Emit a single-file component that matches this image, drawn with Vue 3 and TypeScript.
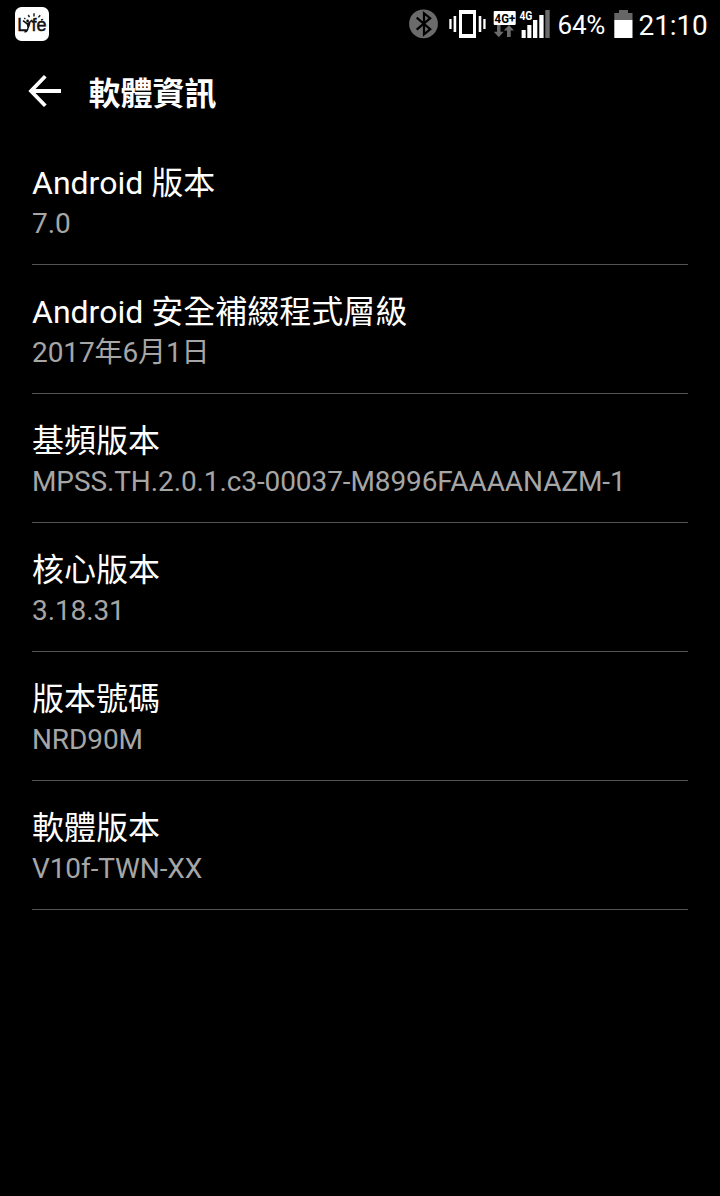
<script setup lang="ts">
interface InfoItem {
  label: string
  value: string
}

const items: InfoItem[] = [
  { label: 'Android 版本', value: '7.0' },
  { label: 'Android 安全補綴程式層級', value: '2017年6月1日' },
  { label: '基頻版本', value: 'MPSS.TH.2.0.1.c3-00037-M8996FAAAANAZM-1' },
  { label: '核心版本', value: '3.18.31' },
  { label: '版本號碼', value: 'NRD90M' },
  { label: '軟體版本', value: 'V10f-TWN-XX' },
]
</script>

<template>
  <div class="screen">
    <header class="status">
      <svg class="app-icon" width="34" height="34" viewBox="0 0 34 34">
        <rect width="34" height="34" rx="6.5" fill="#fff" />
        <text x="2.2" y="24" class="logo">L</text>
        <text x="16.6" y="24" class="logo" textLength="15" lengthAdjust="spacingAndGlyphs">fe</text>
        <path d="M8 13.6l4.6 3.6L17.2 13M14.8 16l-2.2 6.5q-1 2.8-3.2 2.2M12.6 17.2l.6 4" fill="none" stroke="#111" stroke-width="1.6" />
        <circle cx="12.6" cy="14" r="1.4" fill="#111" />
        <path d="M19 6.3v3.2M13.2 8l1.3 2.2M25.2 8.2l-1.8 2.2M28.2 12.4l-2.2.6M9.2 11l1.2 1" fill="none" stroke="#222" stroke-width="1.5" />
      </svg>
      <div class="cluster">
        <svg class="bt" width="30" height="30" viewBox="0 0 30 30">
          <circle cx="14.5" cy="14.8" r="14.4" fill="#6b6b6b" />
          <path d="M7.7 8.7L21.2 20.2L15 25.4V4.2L21.2 9.2L7.7 20.7" fill="none" stroke="#000" stroke-width="2.2" />
        </svg>
        <svg class="vib" width="38" height="30" viewBox="0 0 38 30">
          <path d="M10 1h17v28H10zM13 5v20h11V5z" fill="#fff" fill-rule="evenodd" />
          <path d="M4.6 7h2.6v16H4.6zM.3 10h2.3v10H.3zM29.7 7h2.6v16h-2.6zM34.3 10h2.3v10h-2.3z" fill="#fff" />
        </svg>
        <svg class="data" width="24" height="28" viewBox="0 0 24 28">
          <rect x=".7" y="1" width="22" height="14" rx="1" fill="#fff" />
          <text x="1.6" y="12.8" class="net dark" textLength="20.6" lengthAdjust="spacingAndGlyphs">4G+</text>
          <path d="M4 15h3.5v6.8h3.2L5.8 27.3.8 21.8H4zM14 27v-6.5h-3.2l5.2-5.5 5 5.5h-3.3V27z" fill="#6b6b6b" />
        </svg>
        <svg class="signal" width="32" height="30" viewBox="0 0 32 30">
          <text x=".4" y="10.8" class="net light" textLength="13" lengthAdjust="spacingAndGlyphs">4G</text>
          <path d="M2.6 21h4.1v8H2.6zM8.3 16h4.1v13H8.3zM14 11h4.3v18H14zM20.3 6h4.3v23h-4.3z" fill="#fff" />
          <path d="M26.3 1h4.4v28h-4.4z" fill="#6b6b6b" />
        </svg>
        <span class="percent">64%</span>
        <svg class="battery" width="19" height="28" viewBox="0 0 19 28">
          <path d="M5 0h9v3h4.5v7H.3V3H5z" fill="#666" />
          <path d="M.3 10h18.2v18H.3z" fill="#fff" />
        </svg>
        <span class="clock">21:10</span>
      </div>
    </header>
    <div class="bar">
      <svg class="back" width="34" height="32" viewBox="0 0 34 32">
        <path d="M17.3 1.3L3 16l14.3 14.7M3 16h30" fill="none" stroke="#fff" stroke-width="3.8" />
      </svg>
      <h1>軟體資訊</h1>
    </div>
    <main class="list">
      <section v-for="item in items" :key="item.label" class="item">
        <div class="label">{{ item.label }}</div>
        <div class="value">{{ item.value }}</div>
      </section>
    </main>
  </div>
</template>

<style>
body {
  margin: 0;
  background: #000;
}
</style>

<style scoped>
.screen {
  width: 720px;
  height: 1196px;
  overflow: hidden;
  background: #000;
  color: #fff;
  font-family: Roboto, 'Noto Sans CJK TC', sans-serif;
}
.status {
  display: flex;
  justify-content: space-between;
  align-items: flex-start;
  height: 48px;
  padding: 0 12px 0 15px;
  box-sizing: border-box;
}
.status svg {
  overflow: visible;
}
.app-icon {
  margin-top: 7px;
}
.logo {
  font: 400 18px 'Liberation Sans', sans-serif;
  fill: #111;
  stroke: #111;
  stroke-width: 0.5px;
}
.cluster {
  display: flex;
  align-items: flex-start;
  width: 299px;
}
.cluster > * {
  flex: none;
}
.bt {
  margin-top: 9px;
}
.vib {
  margin: 9px 0 0 10px;
}
.data {
  margin: 10px 0 0 6px;
}
.signal {
  margin: 9px 0 0 2px;
}
.net {
  font-family: Roboto, sans-serif;
  font-weight: 700;
}
.dark {
  font-size: 13px;
  fill: #000;
}
.light {
  font-size: 12px;
  fill: #fff;
}
.percent {
  width: 56.5px;
  margin: 7px 0 0 6.5px;
  font-size: 26px;
  line-height: 36px;
  letter-spacing: -0.2px;
}
.battery {
  margin-top: 10px;
}
.clock {
  margin: 8px 0 0 5.5px;
  font-size: 28px;
  line-height: 36px;
  letter-spacing: -0.1px;
  white-space: nowrap;
}
.bar {
  display: flex;
  align-items: flex-start;
  height: 88px;
  padding: 27px 0 0 28px;
  box-sizing: border-box;
}
.back {
  margin-right: 26.5px;
}
h1 {
  margin: -1px 0 0;
  font-size: 32px;
  line-height: 40px;
  font-weight: 700;
}
.list {
  padding: 0 32px;
}
.item {
  height: 129px;
  padding-top: 28px;
  box-sizing: border-box;
  border-bottom: 1px solid #545454;
}
.label {
  height: 38px;
  font-size: 32px;
  line-height: 38px;
}
.value {
  height: 36px;
  margin-top: 4px;
  font-size: 28px;
  line-height: 36px;
  letter-spacing: -0.1px;
  color: #a6a6a6;
}
</style>
